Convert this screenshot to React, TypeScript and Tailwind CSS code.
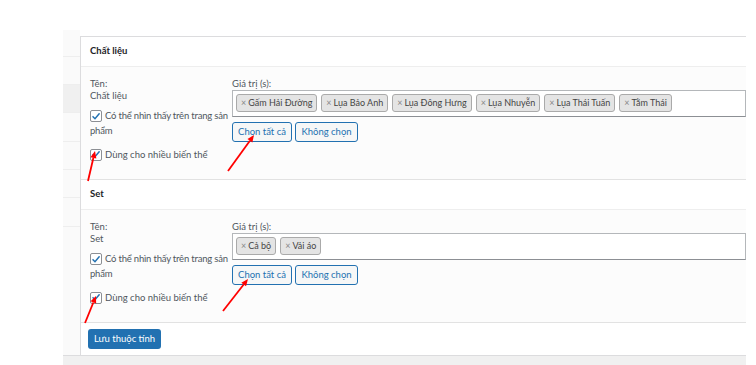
import type { ReactNode } from "react";

const font = { fontFamily: 'Lato, "Noto Sans", Arial, sans-serif' };

type Attr = { name: string; values: string[] };

const attrs: Attr[] = [
  {
    name: "Chất liệu",
    values: ["Gấm Hải Đường", "Lụa Bảo Anh", "Lụa Đông Hưng", "Lụa Nhuyễn", "Lụa Thái Tuấn", "Tằm Thái"],
  },
  { name: "Set", values: ["Cả bộ", "Vải áo"] },
];

// arrows drawn on top of the screenshot: [x1, y1, tipX, tipY]
const arrows: [number, number, number, number][] = [
  [88, 181, 95, 151],
  [228, 171, 254, 135],
  [85, 323, 96, 296],
  [223, 311, 248, 279],
];

function Check() {
  return (
    <span className="flex h-[12px] w-[12px] shrink-0 items-center justify-center rounded-[2px] border border-[#8c8f94] bg-white">
      <svg viewBox="0 0 12 12" className="h-[11px] w-[11px]">
        <path d="M2.4 6.2 L4.8 8.6 L9.8 2.8" fill="none" stroke="#2271b1" strokeWidth="1.8" strokeLinecap="round" />
      </svg>
    </span>
  );
}

function Tag({ children }: { children: ReactNode }) {
  return (
    <span className="flex h-[18px] items-center whitespace-nowrap rounded-[3px] border border-[#aaa] bg-[#e4e4e4] px-[4px] text-[9px] text-[#444]">
      <span className="mr-[2px] text-[9px] text-[#888]">×</span>
      {children}
    </span>
  );
}

function Section({ attr }: { attr: Attr }) {
  return (
    <section className="border-b border-[#e2e2e2]">
      <div className="flex h-[30px] items-center border-b border-[#eee] bg-white px-[9px] text-[9.5px] font-bold text-[#1d2327]">
        {attr.name}
      </div>
      <div className="flex h-[112px] bg-[#fcfcfc] pl-[9px] pt-[11px] text-[9.5px] text-[#50575e]">
        <div className="w-[142px] shrink-0">
          <div className="leading-[12px]">Tên:</div>
          <div className="leading-[12px]">{attr.name}</div>
          <div className="mt-[6px] leading-[15px] tracking-[-0.2px]">
            <span className="float-left mr-[3px] mt-[2px]">
              <Check />
            </span>
            Có thể nhìn thấy trên trang sản phẩm
          </div>
          <div className="mt-[9px] flex items-center gap-[3px] leading-[15px]">
            <Check />
            Dùng cho nhiều biến thể
          </div>
        </div>
        <div className="flex-1">
          <div className="leading-[12px]">Giá trị (s):</div>
          <div className="flex h-[27px] flex-wrap gap-[4px] border border-[#b4b7ba] border-b-[#8c8f94] bg-white px-[3px] pt-[3px]">
            {attr.values.map((v) => (
              <Tag key={v}>{v}</Tag>
            ))}
          </div>
          <div className="mt-[5px] flex gap-[3px]">
            <button className="h-[20px] w-[60px] whitespace-nowrap rounded-[3px] border border-[#2271b1] bg-[#f6f7f7] text-[9.5px] text-[#2271b1]">
              Chọn tất cả
            </button>
            <button className="h-[20px] w-[63px] whitespace-nowrap rounded-[3px] border border-[#2271b1] bg-[#f6f7f7] text-[9.5px] text-[#2271b1]">
              Không chọn
            </button>
          </div>
        </div>
      </div>
    </section>
  );
}

export default function App() {
  return (
    <div className="relative h-[365px] w-[756px] overflow-hidden bg-white" style={font}>
      <div className="ml-[63px] mt-[30px] flex h-[335px] w-[683px]">
        <div className="flex w-[17px] flex-col bg-[#fafafa]">
          <div className="h-[27px] border-b border-[#eee]" />
          <div className="h-[28px] border-b border-[#eee]" />
          <div className="h-[28px] border-b border-[#eee] bg-[#f0f0f0]" />
          <div className="h-[29px] border-b border-[#eee]" />
          <div className="h-[28px] border-b border-[#eee]" />
          <div className="h-[28px] border-b border-[#eee]" />
          <div className="h-[29px] border-b border-[#eee]" />
          <div className="flex-1" />
        </div>
        <div className="flex flex-1 flex-col pt-[6px]">
          <div className="flex-1 border-l border-t border-[#dcdcde]">
            {attrs.map((a) => (
              <Section key={a.name} attr={a} />
            ))}
            <div className="flex h-[32px] items-center bg-white px-[7px]">
              <button className="h-[20px] w-[73px] whitespace-nowrap rounded-[3px] bg-[#2271b1] text-[9.5px] text-white">
                Lưu thuộc tính
              </button>
            </div>
          </div>
        </div>
      </div>
      <div className="absolute bottom-0 left-[63px] h-[10px] w-[683px] border-t border-[#dcdcde] bg-[#f0f0f0]" />
      <svg className="pointer-events-none absolute left-0 top-0" width="756" height="365">
        {arrows.map(([x1, y1, x2, y2], i) => {
          const dx = x2 - x1;
          const dy = y2 - y1;
          const len = Math.hypot(dx, dy);
          const ux = dx / len;
          const uy = dy / len;
          const bx = x2 - ux * 7;
          const by = y2 - uy * 7;
          const px = -uy * 3;
          const py = ux * 3;
          return (
            <g key={i}>
              <line x1={x1} y1={y1} x2={bx} y2={by} stroke="#f00" strokeWidth="1.8" />
              <polygon points={`${x2},${y2} ${bx + px},${by + py} ${bx - px},${by - py}`} fill="#f00" />
            </g>
          );
        })}
      </svg>
    </div>
  );
}
